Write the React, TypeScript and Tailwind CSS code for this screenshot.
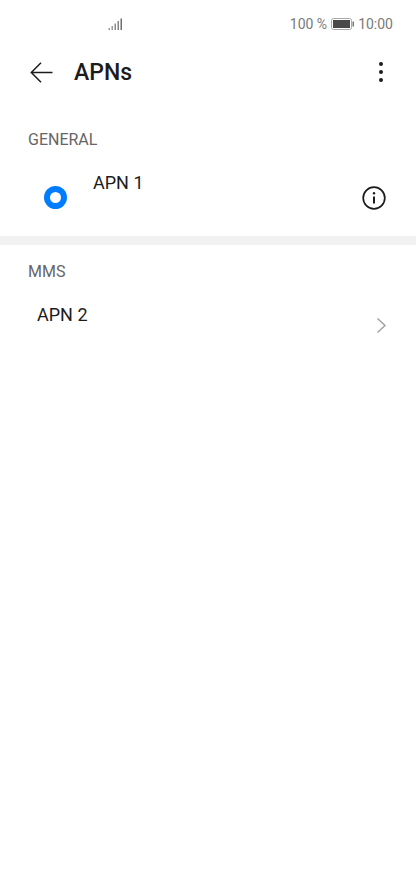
export default function App() {
  return (
    <div className="flex h-[889px] w-[416px] flex-col overflow-hidden bg-white font-['Roboto',sans-serif] text-[#1c1c1c]">
      <div className="flex h-12 items-center pl-[108px] pr-[23px] pt-0 text-[14px] text-[#7a7a7a]">
        <svg width="15" height="13" viewBox="0 0 15 13" fill="#6f6f6f" aria-hidden="true">
          <rect x="0.5" y="10" width="1.5" height="2" opacity="0.7" />
          <rect x="3.5" y="8" width="1.5" height="4" opacity="0.7" />
          <rect x="6.5" y="5.5" width="1.5" height="6.5" opacity="0.8" />
          <rect x="9.5" y="3" width="1.5" height="9" opacity="0.85" />
          <rect x="12.5" y="0.5" width="1.5" height="11.5" />
        </svg>
        <span className="ml-auto">100 %</span>
        <svg className="ml-1" width="24" height="12" viewBox="0 0 24 12" aria-hidden="true">
          <rect x="0.5" y="0.5" width="20" height="11" rx="2" fill="none" stroke="#a8a8a8" />
          <rect x="2" y="2" width="17" height="8" fill="#4a4a4a" />
          <rect x="21.5" y="3.5" width="1.5" height="5" fill="#777777" />
        </svg>
        <span className="ml-[3px]">10:00</span>
      </div>
      <div className="flex h-12 items-center pl-[30px] pr-[32px]">
        <svg width="23" height="21" viewBox="0 0 23 21" fill="none" stroke="#1c1c1c" strokeWidth="1.5" aria-hidden="true">
          <path d="M22.5 10.5H2M11 0.8 1.3 10.5l9.7 9.7" />
        </svg>
        <h1 className="ml-[21px] pt-[2px] text-[23px] font-medium">APNs</h1>
        <svg className="ml-auto" width="6" height="22" viewBox="0 0 6 22" fill="#1c1c1c" aria-hidden="true">
          <circle cx="3" cy="3" r="2" />
          <circle cx="3" cy="11" r="2" />
          <circle cx="3" cy="19" r="2" />
        </svg>
      </div>
      <div className="mt-[34px] pl-7 text-[16px] leading-5 text-[#666666]">GENERAL</div>
      <div className="relative h-[86px]">
        <div className="pl-[93px] pt-[23px] text-[18px] leading-[20px]">APN 1</div>
        <div className="absolute left-[44px] top-[36px] h-[23px] w-[23px] rounded-full border-[6px] border-[#007dff]" />
        <svg className="absolute left-[362px] top-[36px]" width="24" height="24" viewBox="0 0 24 24" fill="none" stroke="#1c1c1c" strokeWidth="1.7" aria-hidden="true">
          <circle cx="12" cy="12" r="10.8" />
          <path d="M12 10.5v7" strokeWidth="2" />
          <circle cx="12" cy="7.2" r="1.2" fill="#1c1c1c" stroke="none" />
        </svg>
      </div>
      <div className="h-[9px] bg-[#f1f1f1]" />
      <div className="mt-[17px] pl-7 text-[16px] leading-5 text-[#666666]">MMS</div>
      <div className="relative h-[86px]">
        <div className="pl-[37px] pt-[23px] text-[18px] leading-[20px]">APN 2</div>
        <svg className="absolute left-[376px] top-[35px]" width="11" height="17" viewBox="0 0 11 17" fill="none" stroke="#a3a3a3" strokeWidth="1.5" aria-hidden="true">
          <path d="M1.5 1.5 9 8.5l-7.5 7" />
        </svg>
      </div>
    </div>
  );
}
